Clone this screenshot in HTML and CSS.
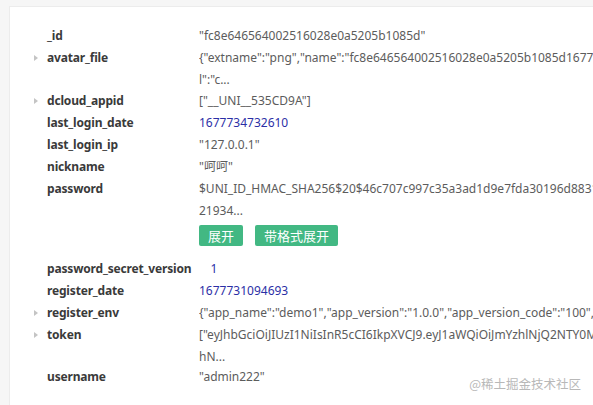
FILE: index.html
```html
<!DOCTYPE html>
<html lang="zh">
<head>
<meta charset="utf-8">
<link rel="stylesheet" href="styles.css">
</head>
<body>
<div class="panel">
  <div class="rows">
    <div class="row"><span class="arrow none"></span><span class="key">_id</span><div class="val"><span class="line">"fc8e646564002516028e0a5205b1085d"</span></div></div>
    <div class="row"><span class="arrow"></span><span class="key">avatar_file</span><div class="val"><span class="line">{"extname":"png","name":"fc8e646564002516028e0a5205b1085d16777</span><span class="line semi">l":"c...</span></div></div>
    <div class="row"><span class="arrow"></span><span class="key">dcloud_appid</span><div class="val"><span class="line">["__UNI__535CD9A"]</span></div></div>
    <div class="row"><span class="arrow none"></span><span class="key">last_login_date</span><div class="val"><span class="line num">1677734732610</span></div></div>
    <div class="row"><span class="arrow none"></span><span class="key">last_login_ip</span><div class="val"><span class="line">"127.0.0.1"</span></div></div>
    <div class="row"><span class="arrow none"></span><span class="key">nickname</span><div class="val"><span class="line">"呵呵"</span></div></div>
    <div class="row"><span class="arrow none"></span><span class="key">password</span><div class="val"><span class="line">$UNI_ID_HMAC_SHA256$20$46c707c997c35a3ad1d9e7fda30196d8831</span><span class="line">21934...</span>
      <div class="btns"><button class="btn">展开</button><button class="btn">带格式展开</button></div></div></div>
    <div class="row"><span class="arrow none"></span><span class="key">password_secret_version</span><div class="val"><span class="line num">1</span></div></div>
    <div class="row"><span class="arrow none"></span><span class="key">register_date</span><div class="val"><span class="line num">1677731094693</span></div></div>
    <div class="row"><span class="arrow"></span><span class="key">register_env</span><div class="val"><span class="line">{"app_name":"demo1","app_version":"1.0.0","app_version_code":"100","a</span></div></div>
    <div class="row"><span class="arrow"></span><span class="key">token</span><div class="val"><span class="line">["eyJhbGciOiJIUzI1NiIsInR5cCI6IkpXVCJ9.eyJ1aWQiOiJmYzhlNjQ2NTY0M</span><span class="line tight">hN...</span></div></div>
    <div class="row"><span class="arrow none"></span><span class="key">username</span><div class="val"><span class="line">"admin222"</span></div></div>
  </div>
  <div class="mark">@稀土掘金技术社区</div>
</div>
</body>
</html>
```
FILE: styles.css
```css
html, body {
  margin: 0;
  padding: 0;
  width: 593px;
  height: 405px;
  overflow: hidden;
  background: #f6f6f6;
}
body {
  display: flex;
  flex-direction: column;
  padding: 6px 0 0 9px;
  box-sizing: border-box;
  font-family: "Noto Sans", "Noto Sans CJK SC", sans-serif;
  font-size: 12px;
}
.panel {
  position: relative;
  flex: 1;
  min-height: 0;
  overflow: hidden;
  background: #fff;
  border-left: 1px solid #ececec;
  border-top: 1px solid #ececec;
  padding: 18px 0 0 22px;
}
.row {
  display: flex;
  align-items: flex-start;
  line-height: 22px;
}
.arrow {
  flex: none;
  width: 0;
  height: 0;
  margin: 8px 9px 0 2px;
  border-left: 4px solid #c4c4c4;
  border-top: 3px solid transparent;
  border-bottom: 3px solid transparent;
}
.arrow.none {
  border-left-color: transparent;
}
.key {
  flex: none;
  min-width: 152px;
  padding-right: 19px;
  box-sizing: border-box;
  font-weight: 700;
  letter-spacing: -0.17px;
  color: #3a3a3a;
}
.val {
  min-width: 0;
  overflow: hidden;
  color: #5c5c5c;
  white-space: nowrap;
}
.line {
  display: block;
}
.line.semi {
  margin-bottom: -1px;
}
.line.tight {
  margin-bottom: -2px;
}
.num {
  color: #2b2fa6;
}
.btns {
  display: flex;
  gap: 12px;
  margin: 3px 0 12px;
}
.btn {
  box-sizing: border-box;
  border: none;
  background: #42b883;
  color: #fff;
  font-family: "Noto Sans CJK SC", sans-serif;
  font-size: 13px;
  height: 21px;
  line-height: 21px;
  padding: 0 9px;
  border-radius: 2px;
}
.mark {
  position: absolute;
  right: 12px;
  bottom: 12px;
  color: #b8b8b8;
  font-family: "Noto Sans CJK SC", sans-serif;
  font-size: 12.5px;
}
```
